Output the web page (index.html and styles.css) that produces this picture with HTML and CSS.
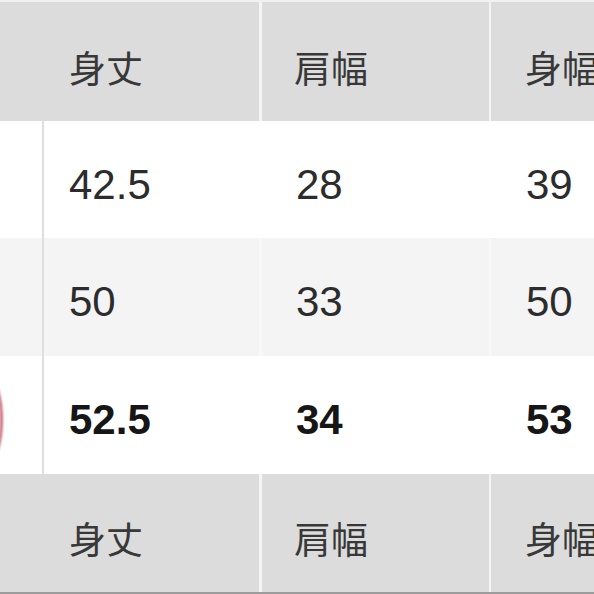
FILE: index.html
```html
<!DOCTYPE html>
<html lang="ja">
<head>
<meta charset="utf-8">
<link rel="stylesheet" href="styles.css">
</head>
<body>
<div class="table">
  <div class="row head">
    <div class="cell first">身丈</div>
    <div class="cell second">肩幅</div>
    <div class="cell third">身幅</div>
  </div>
  <div class="row data r1">
    <div class="cell lead"></div>
    <div class="cell c1">42.5</div>
    <div class="cell second">28</div>
    <div class="cell third">39</div>
  </div>
  <div class="row data r2">
    <div class="cell lead"></div>
    <div class="cell c1">50</div>
    <div class="cell second">33</div>
    <div class="cell third">50</div>
  </div>
  <div class="row data r3 bold">
    <div class="cell lead"><span class="mark"></span></div>
    <div class="cell c1">52.5</div>
    <div class="cell second">34</div>
    <div class="cell third">53</div>
  </div>
  <div class="row head foot">
    <div class="cell first">身丈</div>
    <div class="cell second">肩幅</div>
    <div class="cell third">身幅</div>
  </div>
</div>
</body>
</html>
```
FILE: styles.css
```css
html, body {
  margin: 0;
  padding: 0;
  width: 594px;
  height: 594px;
  overflow: hidden;
  background: #ffffff;
}

.table {
  width: 594px;
  border-top: 2px solid #f1f1f1;
  border-bottom: 2px solid #9c9c9c;
  font-family: "Liberation Sans", "Noto Sans CJK JP", sans-serif;
  color: #2c2c2c;
}

.row {
  display: grid;
  grid-template-columns: 44px 218px 229px 1fr;
}

.cell {
  display: flex;
  align-items: center;
  white-space: nowrap;
  overflow: hidden;
  box-sizing: border-box;
  padding-top: 10px;
}

.head {
  height: 119px;
  background: #dcdcdc;
  font-family: "Noto Sans CJK JP", "Liberation Sans", sans-serif;
  font-size: 37px;
  color: #383838;
}

.foot {
  height: 118px;
}

.head .first {
  grid-column: 1 / 3;
  padding-left: 69px;
  border-right: 3px solid #f4f4f4;
}

.head .second {
  border-right: 2px solid #f4f4f4;
  padding-left: 32px;
}

.head .third {
  padding-left: 34px;
}

.data {
  height: 117px;
  font-size: 42px;
}

.r2, .r3 {
  height: 118px;
}

.r2 {
  background: #f4f4f4;
}

.bold {
  font-weight: bold;
  color: #161616;
}

.lead {
  border-right: 2px solid #dedede;
  position: relative;
  overflow: visible;
}

.c1 {
  padding-left: 25px;
}

.data .c1 {
  border-right: 3px solid rgba(255, 255, 255, 0.4);
}

.data .second {
  padding-left: 34px;
  border-right: 2px solid rgba(255, 255, 255, 0.4);
}

.data .third {
  padding-left: 35px;
}

.mark {
  position: absolute;
  left: -25px;
  top: 22px;
  width: 28px;
  height: 84px;
  border: 3px solid rgba(185, 55, 75, 0.75);
  border-radius: 50%;
  box-sizing: border-box;
  filter: blur(0.8px);
}
```
